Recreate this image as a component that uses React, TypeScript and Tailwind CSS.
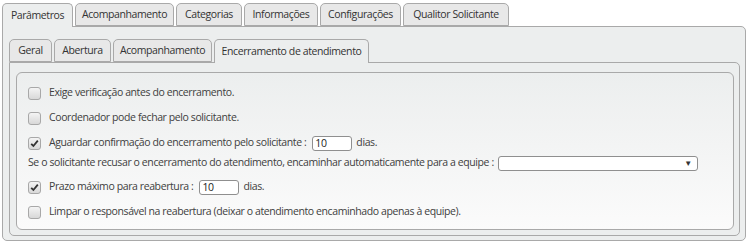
import React from 'react';

const outerTabs = [
  { label: 'Parâmetros', w: 'w-[71px]', active: true },
  { label: 'Acompanhamento', w: 'w-[99px]' },
  { label: 'Categorias', w: 'w-[66px]' },
  { label: 'Informações', w: 'w-[74px]' },
  { label: 'Configurações', w: 'w-[81px]' },
  { label: 'Qualitor Solicitante', w: 'w-[106px]' },
];

const innerTabs = [
  { label: 'Geral', w: 'w-[43px]' },
  { label: 'Abertura', w: 'w-[57px]' },
  { label: 'Acompanhamento', w: 'w-[99px]' },
  { label: 'Encerramento de atendimento', w: 'w-[155px]', active: true },
];

function Tab({ label, w, active }: { label: string; w: string; active?: boolean }) {
  return (
    <div
      className={`${w} h-[23px] flex items-center justify-center border border-[#a9a9a9] rounded-t-[5px] text-[#333] whitespace-nowrap ${
        active ? 'border-b-0 h-[24px] -mb-px bg-[#eceeee] relative' : 'bg-[#e8e8e8]'
      }`}
    >
      {label}
    </div>
  );
}

function Check({ checked }: { checked?: boolean }) {
  return (
    <span className="w-[13px] h-[13px] shrink-0 rounded-[3px] border border-[#a8a8a8] bg-gradient-to-b from-[#f4f4f4] to-[#d8d8d8] flex items-center justify-center">
      {checked && (
        <svg width="9" height="9" viewBox="0 0 9 9">
          <path d="M1.2 4.8 L3.4 7 L7.8 1.6" fill="none" stroke="#333" strokeWidth="1.8" />
        </svg>
      )}
    </span>
  );
}

function NumBox() {
  return (
    <span className="w-[40px] h-[15px] bg-white border border-[#8f8f8f] rounded-[3px] pl-[2px] leading-[13px] text-[#222]">10</span>
  );
}

export default function App() {
  return (
    <div
      className="w-[748px] h-[245px] bg-white pt-[3px] pl-[2px] text-[10.5px] tracking-[-0.4px] text-[#404040] whitespace-nowrap"
      style={{ fontFamily: '"Open Sans", "Noto Sans", sans-serif' }}
    >
      <div className="flex gap-[2px]">
        {outerTabs.map((t) => (
          <Tab key={t.label} {...t} />
        ))}
      </div>
      <div className="w-[744px] h-[215px] border border-[#a9a9a9] rounded-[5px] rounded-tl-none bg-[#eceeee] pt-[12px] px-[6px]">
        <div className="flex gap-[2px]">
          {innerTabs.map((t) => (
            <Tab key={t.label} {...t} />
          ))}
        </div>
        <div className="w-[731px] h-[174px] border border-[#a9a9a9] rounded-[5px] rounded-tl-none pt-[9px] px-[6px]">
          <div className="w-[718px] h-[158px] border border-[#a9a9a9] rounded-[6px] bg-gradient-to-b from-[#eceeee] to-[#fbfbfb] pl-[11px] pt-[12px]">
            <div className="flex items-center gap-[8px] h-[16px]">
              <Check />
              <span>Exige verificação antes do encerramento.</span>
            </div>
            <div className="flex items-center gap-[8px] h-[16px] mt-[9px]">
              <Check />
              <span>Coordenador pode fechar pelo solicitante.</span>
            </div>
            <div className="flex items-center gap-[8px] h-[16px] mt-[9px]">
              <Check checked />
              <span>Aguardar confirmação do encerramento pelo solicitante :</span>
              <span className="flex items-center gap-[4px] -ml-[2px]">
                <NumBox />
                <span>dias.</span>
              </span>
            </div>
            <div className="flex items-center gap-[4px] h-[16px] mt-[4px]">
              <span>Se o solicitante recusar o encerramento do atendimento, encaminhar automaticamente para a equipe :</span>
              <span className="w-[200px] h-[15px] bg-white border border-[#8f8f8f] rounded-[3px] flex items-center justify-end pr-[5px]">
                <span className="text-[8px] text-[#333] leading-none">▼</span>
              </span>
            </div>
            <div className="flex items-center gap-[8px] h-[16px] mt-[8px]">
              <Check checked />
              <span>Prazo máximo para reabertura :</span>
              <span className="flex items-center gap-[4px] -ml-[2px]">
                <NumBox />
                <span>dias.</span>
              </span>
            </div>
            <div className="flex items-center gap-[8px] h-[16px] mt-[9px]">
              <Check />
              <span>Limpar o responsável na reabertura (deixar o atendimento encaminhado apenas à equipe).</span>
            </div>
          </div>
        </div>
      </div>
    </div>
  );
}
